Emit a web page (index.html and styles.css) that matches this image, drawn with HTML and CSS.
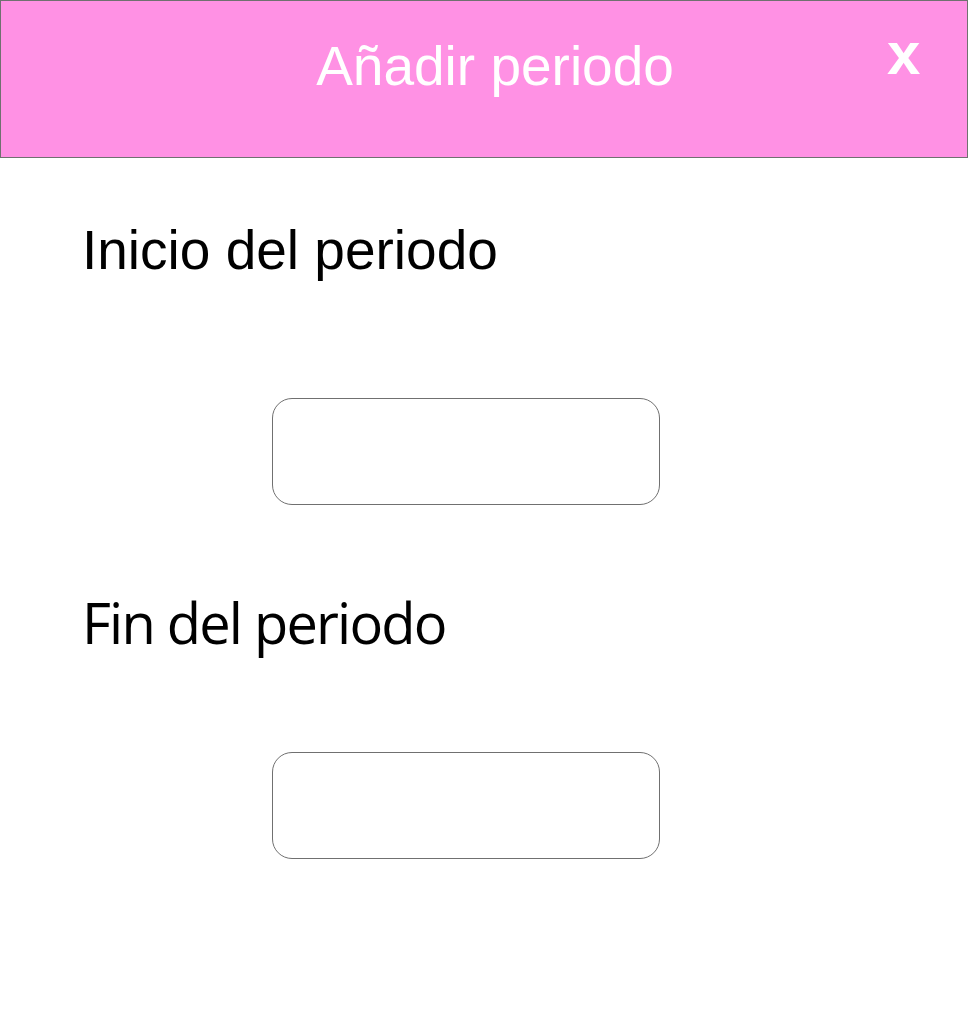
FILE: index.html
```
<!DOCTYPE html>
<html lang="es">
<head>
<meta charset="utf-8">
<title>Añadir periodo</title>
<link rel="stylesheet" href="styles.css">
</head>
<body>
<div class="dialog">
  <header class="dialog-header">
    <h1 class="dialog-title">Añadir periodo</h1>
    <button class="dialog-close" type="button">x</button>
  </header>
  <main class="dialog-body">
    <label class="field-label label-start">Inicio del periodo</label>
    <input class="field-input input-start" type="text">
    <label class="field-label label-end">Fin del periodo</label>
    <input class="field-input input-end" type="text">
  </main>
</div>
</body>
</html>
```
FILE: styles.css
```
* { box-sizing: border-box; }
html, body { margin: 0; padding: 0; background: #fff; }
body { width: 968px; height: 1010px; overflow: hidden; }

.dialog { display: flex; flex-direction: column; }

.dialog-header {
  height: 158px;
  background: #ff91e4;
  border: 1px solid #707070;
  display: flex;
  align-items: flex-start;
  padding: 21px 47px 0 102px;
}

.dialog-title {
  flex: 1;
  margin: 0;
  padding-top: 12px;
  text-align: center;
  font-family: "Liberation Sans", Arial, sans-serif;
  font-weight: normal;
  font-size: 55px;
  line-height: 64px;
  color: #fff;
}

.dialog-close {
  margin: 0;
  padding: 0;
  border: 0;
  background: none;
  width: 33px;
  font-family: "Liberation Sans", Arial, sans-serif;
  font-weight: bold;
  font-size: 60px;
  line-height: 64px;
  color: #fff;
  cursor: pointer;
}

.dialog-body {
  display: flex;
  flex-direction: column;
  align-items: flex-start;
  padding-left: 79px;
}

.field-label {
  display: block;
  color: #000;
  line-height: 64px;
}

.label-start {
  margin-top: 60px;
  margin-left: 3px;
  font-family: "Liberation Sans", Arial, sans-serif;
  font-size: 55px;
}

.label-end {
  margin-top: 85px;
  margin-left: 3px;
  font-family: "Open Sans", "Noto Sans", sans-serif;
  font-size: 56px;
  letter-spacing: -1.8px;
}

.field-input {
  width: 388px;
  height: 107px;
  margin-left: 193px;
  border: 1px solid #707070;
  border-radius: 20px;
  background: #fff;
  outline: none;
  font-size: 30px;
  padding: 0 16px;
}

.input-start { margin-top: 116px; }
.input-end { margin-top: 98px; }
```
